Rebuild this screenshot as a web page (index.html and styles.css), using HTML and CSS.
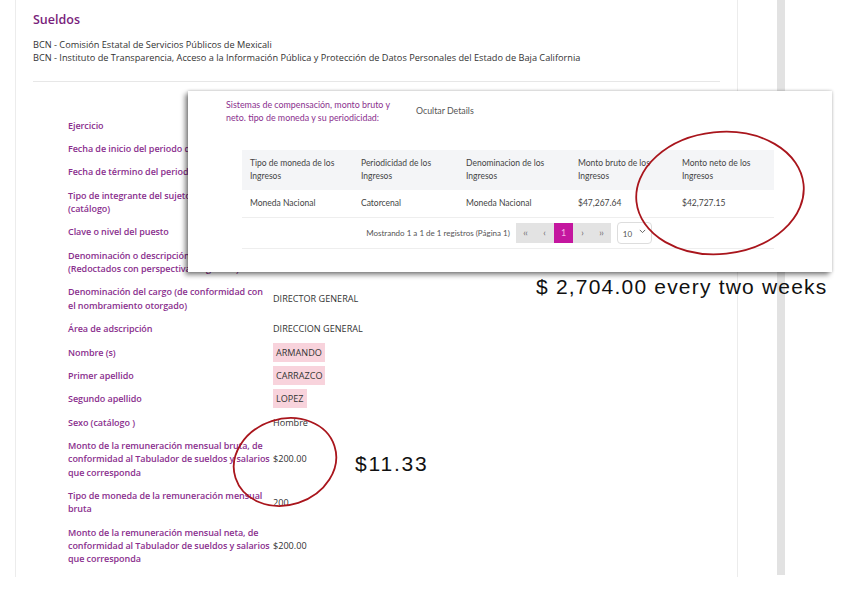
FILE: index.html
```html
<!DOCTYPE html>
<html lang="es">
<head>
<meta charset="utf-8">
<title>Sueldos</title>
<link rel="stylesheet" href="styles.css">
</head>
<body>
<div class="screen">
  <main class="page">
    <h1 class="title">Sueldos</h1>
    <div class="orgs">
      <div>BCN - Comisión Estatal de Servicios Públicos de Mexicali</div>
      <div>BCN - Instituto de Transparencia, Acceso a la Información Pública y Protección de Datos Personales del Estado de Baja California</div>
    </div>
    <hr class="sep">
    <div class="rows">
      <div class="label">Ejercicio</div><div class="value"></div>
      <div class="label">Fecha de inicio del periodo que se informa</div><div class="value"></div>
      <div class="label">Fecha de término del periodo que se informa</div><div class="value"></div>
      <div class="label">Tipo de integrante del sujeto obligado<br>(catálogo)</div><div class="value"></div>
      <div class="label">Clave o nivel del puesto</div><div class="value"></div>
      <div class="label">Denominación o descripción del puesto<br>(Redoctados con perspectiva de género)</div><div class="value"></div>
      <div class="label">Denominación del cargo (de conformidad con<br>el nombramiento otorgado)</div><div class="value">DIRECTOR GENERAL</div>
      <div class="label">Área de adscripción</div><div class="value">DIRECCION GENERAL</div>
      <div class="label">Nombre (s)</div><div class="value"><span class="mark">ARMANDO</span></div>
      <div class="label">Primer apellido</div><div class="value"><span class="mark">CARRAZCO</span></div>
      <div class="label">Segundo apellido</div><div class="value"><span class="mark">LOPEZ</span></div>
      <div class="label">Sexo (catálogo )</div><div class="value">Hombre</div>
      <div class="label">Monto de la remuneración mensual bruta, de<br>conformidad al Tabulador de sueldos y salarios<br>que corresponda</div><div class="value">$200.00</div>
      <div class="label">Tipo de moneda de la remuneración mensual<br>bruta</div><div class="value">200</div>
      <div class="label">Monto de la remuneración mensual neta, de<br>conformidad al Tabulador de sueldos y salarios<br>que corresponda</div><div class="value">$200.00</div>
    </div>
  </main>
  <div class="gutter"></div>
  <div class="scrollbar"></div>
</div>

<section class="card">
  <div class="card-head">
    <div class="card-title">Sistemas de compensación, monto bruto y neto. tipo de moneda y su periodicidad:</div>
    <div class="card-toggle">Ocultar Details</div>
  </div>
  <div class="table">
    <div class="tr th">
      <div>Tipo de moneda de los Ingresos</div>
      <div>Periodicidad de los Ingresos</div>
      <div>Denominacion de los Ingresos</div>
      <div>Monto bruto de los Ingresos</div>
      <div>Monto neto de los Ingresos</div>
    </div>
    <div class="tr td">
      <div>Moneda Nacional</div>
      <div>Catorcenal</div>
      <div>Moneda Nacional</div>
      <div>$47,267.64</div>
      <div>$42,727.15</div>
    </div>
    <div class="pager">
      <span class="pager-info">Mostrando 1 a 1 de 1 registros (Página 1)</span>
      <div class="pager-btns">
        <span class="pbtn">‹‹</span><span class="pbtn">‹</span><span class="pbtn active">1</span><span class="pbtn">›</span><span class="pbtn">››</span>
      </div>
      <div class="pager-size">10
        <svg width="7" height="5" viewBox="0 0 7 5"><path d="M0.8 0.9 L3.5 3.6 L6.2 0.9" fill="none" stroke="#666" stroke-width="1"/></svg>
      </div>
    </div>
  </div>
</section>

<div class="note note-big">$ 2,704.00 every two weeks</div>
<div class="note note-small">$11.33</div>

<svg class="marks" width="857" height="609" viewBox="0 0 857 609">
  <ellipse cx="720" cy="193" rx="84" ry="61" transform="rotate(-6 720 193)" fill="none" stroke="#a9151c" stroke-width="1.8"/>
  <ellipse cx="285" cy="462" rx="52" ry="43" transform="rotate(-18 285 462)" fill="none" stroke="#a9151c" stroke-width="1.8"/>
</svg>
</body>
</html>
```
FILE: styles.css
```css
html, body {
  margin: 0;
  padding: 0;
  background: #ffffff;
}
body {
  width: 857px;
  height: 609px;
  overflow: hidden;
  position: relative;
  font-family: "Open Sans", "Noto Sans", sans-serif;
  color: #333;
}
.screen {
  display: flex;
  height: 577px;
}
.page {
  margin-left: 15px;
  width: 723px;
  box-sizing: border-box;
  border-left: 1px solid #ececec;
  border-right: 1px solid #ececec;
  padding: 12px 0 0 17px;
}
.gutter {
  width: 39px;
}
.scrollbar {
  width: 8px;
  height: 575px;
  background: #e2e2e2;
}
.title {
  margin: 0;
  font-size: 12.5px;
  line-height: 16px;
  font-weight: 600;
  color: #7a1f7c;
}
.orgs {
  margin-top: 9.5px;
  font-size: 9.2px;
  line-height: 13px;
  color: #333;
}
.sep {
  margin: 17px 17px 0 0;
  border: 0;
  border-top: 1px solid #e7e7e7;
  height: 0;
}
.rows {
  margin-top: 37px;
  padding-left: 35px;
  display: grid;
  grid-template-columns: 205px 1fr;
  row-gap: 10.1px;
  align-items: center;
}
.label {
  font-size: 9px;
  line-height: 13.3px;
  font-weight: 600;
  letter-spacing: -0.06px;
  color: #8a2f8e;
  white-space: nowrap;
}
.value {
  font-size: 9.1px;
  line-height: 13.3px;
  color: #333;
}
.mark {
  background: #f8d3dc;
  padding: 3px 3px;
}

/* overlay card */
.card {
  position: absolute;
  left: 188px;
  top: 91px;
  width: 644px;
  height: 181px;
  background: #fff;
  box-shadow: -3px 3px 5px rgba(0, 0, 0, 0.45), 0 0 3px rgba(0, 0, 0, 0.25);
  font-family: "Lato", "Noto Sans", sans-serif;
  box-sizing: border-box;
  padding: 6.5px 0 0 38px;
}
.card-head {
  display: flex;
  align-items: center;
  gap: 18px;
}
.card-title {
  width: 172px;
  font-size: 8.9px;
  line-height: 13px;
  color: #8a2f8e;
}
.card-toggle {
  font-size: 8.8px;
  color: #555;
}
.table {
  margin: 26px 0 0 16px;
  width: 532px;
  font-size: 8.5px;
  color: #444;
}
.tr {
  display: grid;
  grid-template-columns: 111px 105px 112px 104px 100px;
  align-items: center;
}
.tr > div {
  padding-left: 8px;
  padding-right: 6px;
}
.th {
  height: 40px;
  background: #f4f5f7;
  line-height: 13px;
}
.td {
  height: 27px;
  border-bottom: 1px solid #eeeeee;
}
.pager {
  height: 30px;
  border-bottom: 1px solid #eeeeee;
  display: flex;
  align-items: center;
  justify-content: center;
  gap: 6px;
  padding-left: 2px;
}
.pager-info {
  color: #555;
  font-size: 8px;
}
.pager-btns {
  display: flex;
  background: #e3e3e3;
  height: 20px;
}
.pbtn {
  width: 19px;
  display: flex;
  align-items: center;
  justify-content: center;
  color: #666;
  font-size: 9px;
  letter-spacing: -0.5px;
}
.pbtn.active {
  background: #c4169f;
  color: #f3b4e4;
}
.pager-size {
  width: 35px;
  height: 22px;
  box-sizing: border-box;
  border: 1px solid #dddddd;
  border-radius: 4px;
  display: flex;
  align-items: center;
  gap: 7px;
  padding: 2px 0 0 5px;
  font-size: 8px;
  color: #555;
}
.pager-size svg {
  margin-top: -4px;
}

.note {
  position: absolute;
  font-family: "Liberation Sans", Arial, sans-serif;
  color: #111;
  white-space: nowrap;
  line-height: 1;
}
.note-big {
  left: 536px;
  top: 276px;
  font-size: 21px;
  letter-spacing: 1.2px;
}
.note-small {
  left: 355px;
  top: 453px;
  font-size: 21px;
  letter-spacing: 1.8px;
}
.marks {
  position: absolute;
  left: 0;
  top: 0;
  pointer-events: none;
}
```
